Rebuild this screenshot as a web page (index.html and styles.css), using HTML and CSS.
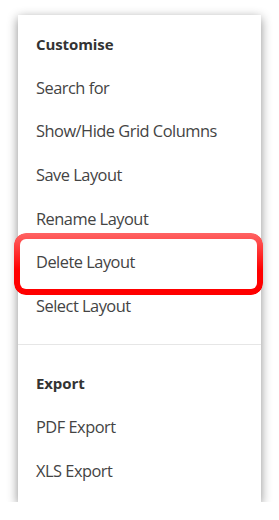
FILE: index.html
```html
<!DOCTYPE html>
<html lang="en">
<head>
  <meta charset="UTF-8">
  <meta name="viewport" content="width=device-width, initial-scale=1.0">
  <title>Grid menu</title>
  <link rel="stylesheet" href="styles.css">
</head>
<body>
  <div class="menu-card">
    <ul class="menu-section first">
      <li class="menu-title">Customise</li>
      <li class="menu-item">Search for</li>
      <li class="menu-item">Show/Hide Grid Columns</li>
      <li class="menu-item">Save Layout</li>
      <li class="menu-item">Rename Layout</li>
      <li class="menu-item highlighted">Delete Layout</li>
      <li class="menu-item">Select Layout</li>
    </ul>
    <ul class="menu-section last">
      <li class="menu-title">Export</li>
      <li class="menu-item">PDF Export</li>
      <li class="menu-item">XLS Export</li>
    </ul>
  </div>
</body>
</html>
```

FILE: styles.css
```css
html, body {
  margin: 0;
  padding: 0;
  background: #fff;
  font-family: 'Open Sans', sans-serif;
}

body {
  padding: 15px 18px 0 18px;
}

.menu-card {
  width: 243px;
  background: #fff;
  box-shadow: 0 3px 10px rgba(0, 0, 0, 0.45);
}

.menu-section {
  list-style: none;
  margin: 0;
  padding: 0;
}

.menu-section.first {
  padding: 7px 0 17px;
  border-bottom: 1px solid #e6e6e6;
}

.menu-section.last {
  padding: 16px 0 10px;
}

.menu-title,
.menu-item {
  height: 43.6px;
  display: flex;
  align-items: center;
  padding-left: 18px;
}

.menu-title {
  font-size: 15px;
  font-weight: bold;
  color: #333;
  letter-spacing: -0.1px;
}

.menu-item {
  font-size: 16.4px;
  color: #444;
  letter-spacing: -0.5px;
}

.highlighted {
  position: relative;
}

.highlighted::after {
  content: "";
  position: absolute;
  left: -4px;
  right: -2px;
  top: -7px;
  bottom: -11px;
  padding: 6px;
  border-radius: 12px;
  background: linear-gradient(#ff6464, #ff0000 60%);
  -webkit-mask: linear-gradient(#000 0 0) content-box, linear-gradient(#000 0 0);
  -webkit-mask-composite: xor;
  mask-composite: exclude;
}
```
